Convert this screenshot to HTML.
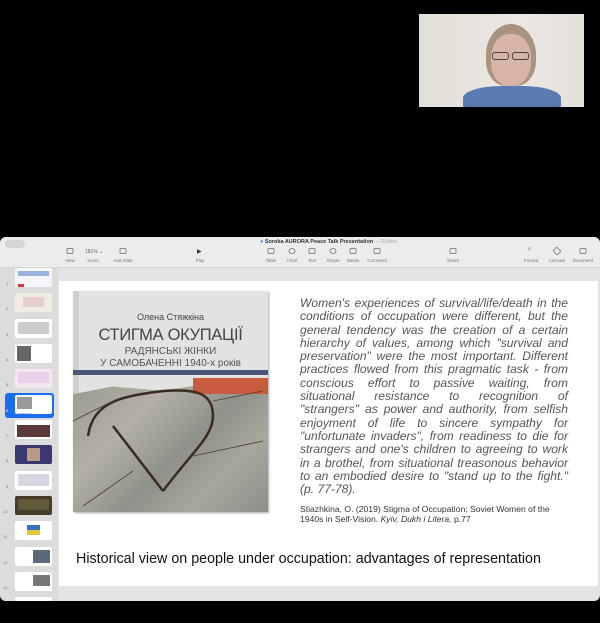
<!DOCTYPE html>
<html><head><meta charset="utf-8"><style>
*{margin:0;padding:0;box-sizing:border-box}
body{width:600px;height:623px;background:#000;position:relative;overflow:hidden;font-family:"Liberation Sans",sans-serif}
.abs{position:absolute}
#cam{left:419px;top:14px;width:165px;height:93px;background:#e6e3dd;overflow:hidden}
#win{left:0;top:237px;width:600px;height:364px;background:#e3e3e3;border-radius:6px;overflow:hidden}
#tb{left:0;top:0;width:600px;height:31px;background:#ececec;border-bottom:1px solid #d4d4d4}
.lbl{position:absolute;top:21px;font-size:4.5px;color:#777;transform:translateX(-50%)}
.ic{position:absolute;top:11px;width:7px;height:6px;border:1px solid #888;border-radius:1.5px;transform:translateX(-50%)}
#side{left:0;top:31px;width:58px;height:333px;background:#dcdcdc}
.th{position:absolute;left:15px;width:37px;height:19px;background:#fff;border-radius:2px;overflow:hidden}
.num{position:absolute;left:6px;font-size:4px;color:#777}
#slide{left:59px;top:44px;width:539px;height:305px;background:#fff}
#quote{left:300px;top:297px;width:268px;font-size:12.1px;line-height:13.3px;font-style:italic;color:#555}
#quote div{text-align:justify;text-align-last:justify;white-space:nowrap;height:13.3px}
#quote div.l{text-align-last:left}
</style></head><body>
<div id="cam" class="abs">
 <div class="abs" style="left:0;top:0;width:165px;height:93px;background:linear-gradient(90deg,#e2dfd9,#ebe8e3 60%,#e4e1dc)"></div>
 <div class="abs" style="left:67px;top:10px;width:50px;height:62px;border-radius:50% 50% 40% 40%;background:#a8937e"></div>
 <div class="abs" style="left:72px;top:20px;width:40px;height:52px;border-radius:45%;background:#d8b4a8"></div>
 <div class="abs" style="left:73px;top:38px;width:17px;height:8px;border:1px solid #444;border-radius:3px"></div>
 <div class="abs" style="left:93px;top:38px;width:17px;height:8px;border:1px solid #444;border-radius:3px"></div>
 <div class="abs" style="left:44px;top:72px;width:98px;height:30px;border-radius:40% 40% 0 0;background:#5b7bb0"></div>
</div>
<div id="win" class="abs">
 <div id="tb" class="abs">
  <div class="abs" style="left:5px;top:3px;width:20px;height:8px;background:#d5d5d5;border-radius:4px"></div>
  <div class="abs" style="left:260px;top:2px;font-size:5.5px;color:#333;font-weight:bold"><span style="color:#3a8ee6">●</span> Soroka AURORA Peace Talk Presentation <span style="color:#aaa;font-weight:normal">— Edited</span></div>
  <div class="ic" style="left:70px"></div><div class="lbl" style="left:70px">View</div>
  <div class="abs" style="left:85px;top:12px;font-size:5px;color:#666">181% ⌄</div><div class="lbl" style="left:93px">Zoom</div>
  <div class="ic" style="left:123px"></div><div class="lbl" style="left:123px">Add Slide</div>
  <div class="abs" style="left:197px;top:11px;font-size:6px;color:#333">▶</div><div class="lbl" style="left:200px">Play</div>
  <div class="ic" style="left:271px"></div><div class="lbl" style="left:271px">Table</div>
  <div class="ic" style="left:292px;border-radius:50%"></div><div class="lbl" style="left:292px">Chart</div>
  <div class="ic" style="left:312px"></div><div class="lbl" style="left:312px">Text</div>
  <div class="ic" style="left:333px;border-radius:50%"></div><div class="lbl" style="left:333px">Shape</div>
  <div class="ic" style="left:353px"></div><div class="lbl" style="left:353px">Media</div>
  <div class="ic" style="left:377px"></div><div class="lbl" style="left:377px">Comment</div>
  <div class="ic" style="left:453px"></div><div class="lbl" style="left:453px">Share</div>
  <div class="ic" style="left:531px;border:none;color:#777;font-size:7px;top:9px">⌕</div><div class="lbl" style="left:531px">Format</div>
  <div class="ic" style="left:557px;transform:translateX(-50%) rotate(45deg)"></div><div class="lbl" style="left:557px">Animate</div>
  <div class="ic" style="left:583px"></div><div class="lbl" style="left:583px">Document</div>
 </div>
 <div id="side" class="abs">
  <div class="abs" style="left:5px;top:125px;width:49px;height:25px;background:#1a6ef0;border-radius:3px"></div>
  <div class="th" style="top:0px;background:#f4f6fc"><div style="margin:3px;height:5px;background:#9ab0dd"></div><div style="margin:8px 3px 0;width:6px;height:3px;background:#d33"></div></div>
  <div class="th" style="top:25px;background:#f1ece2"><div style="margin:4px 8px;height:10px;background:#e7cfcf"></div></div>
  <div class="th" style="top:51px"><div style="margin:3px;height:12px;background:#ccc"></div></div>
  <div class="th" style="top:76px"><div style="float:left;margin:2px;width:14px;height:15px;background:#666"></div><div style="float:left;margin:2px;width:16px;height:15px;background:#aaa"></div></div>
  <div class="th" style="top:101px;background:#f3e6f0"><div style="margin:3px;height:11px;background:#e7d0e8"></div></div>
  <div class="th" style="top:127px"><div style="float:left;margin:2px;width:15px;height:12px;background:#999"></div><div style="float:left;margin:2px;width:15px;height:12px;background:#ccc"></div></div>
  <div class="th" style="top:152px"><div style="margin:5px 2px 0;height:12px;background:#5a3a36"></div></div>
  <div class="th" style="top:177px;background:#3a3870"><div style="margin:3px 12px;height:13px;background:#b79b84"></div></div>
  <div class="th" style="top:203px"><div style="margin:3px;height:12px;background:#d6d6e0"></div></div>
  <div class="th" style="top:228px;background:#4a3a2a"><div style="margin:3px;height:11px;background:#5e5a3a"></div></div>
  <div class="th" style="top:253px"><div style="margin:4px 12px;height:10px;background:#e5c53a;border-top:5px solid #3a70c0"></div></div>
  <div class="th" style="top:279px"><div style="margin:3px 2px 3px 18px;height:13px;background:#5a6a7a"></div></div>
  <div class="th" style="top:304px"><div style="margin:3px 2px 3px 18px;height:11px;background:#777"></div></div>
  <div class="th" style="top:329px"></div>
  <div class="num" style="top:13px">1</div><div class="num" style="top:38px">2</div><div class="num" style="top:64px">3</div><div class="num" style="top:89px">4</div><div class="num" style="top:114px">5</div><div class="num" style="top:140px;color:#fff">6</div><div class="num" style="top:165px">7</div><div class="num" style="top:190px">8</div><div class="num" style="top:216px">9</div><div class="num" style="top:241px;left:3px">10</div><div class="num" style="top:266px;left:3px">11</div><div class="num" style="top:292px;left:3px">12</div><div class="num" style="top:317px;left:3px">13</div>
 </div>
 <div id="slide" class="abs"></div>
</div>
<!-- book -->
<div class="abs" style="left:73px;top:291px;width:195px;height:221px;background:#e2e2e0;box-shadow:1px 1px 2px #aaa;overflow:hidden">
 <div class="abs" style="left:0;top:0;width:6px;height:221px;background:#cfcfcd"></div>
 <div class="abs" style="left:0;top:21px;width:195px;text-align:center;font-size:9px;color:#444">Олена Стяжкіна</div>
 <div class="abs" style="left:0;top:35px;width:195px;text-align:center;font-size:16.5px;color:#444;letter-spacing:-0.3px">СТИГМА ОКУПАЦІЇ</div>
 <div class="abs" style="left:0;top:55px;width:195px;text-align:center;font-size:10px;line-height:12px;color:#555">РАДЯНСЬКІ ЖІНКИ<br>У САМОБАЧЕННІ 1940-х років</div>
 <div class="abs" style="left:0;top:79px;width:195px;height:5px;background:#4a5578"></div>
 <div class="abs" style="left:0;top:93px;width:195px;height:128px;background:linear-gradient(135deg,#9a9a90,#b3b1a6 30%,#8f918a 55%,#a8a79e 75%,#8c8f8a);clip-path:polygon(0 8%,20% 2%,45% 5%,70% 0,100% 6%,100% 100%,0 100%)"></div>
 <div class="abs" style="left:120px;top:87px;width:75px;height:16px;background:#c85a3e"></div>
 <svg class="abs" style="left:0;top:0" width="195" height="221"><g fill="none" stroke="#3a2a22" stroke-width="2.5"><path d="M15 145 C20 110 50 105 90 100 C120 98 140 100 140 125 C140 145 120 160 90 200"/><path d="M40 135 L90 200"/></g><g fill="none" stroke="#4a3a34" stroke-width="0.8"><path d="M0 130 L40 110 M120 165 L190 150 M60 180 L10 215 M140 110 L190 100"/></g></svg>
</div>
<div id="quote" class="abs">
<div>Women's experiences of survival/life/death in the</div>
<div>conditions of occupation were different, but the</div>
<div>general tendency was the creation of a certain</div>
<div>hierarchy of values, among which "survival and</div>
<div>preservation" were the most important. Different</div>
<div>practices flowed from this pragmatic task - from</div>
<div>conscious effort to passive waiting, from</div>
<div>situational resistance to recognition of</div>
<div>"strangers" as power and authority, from selfish</div>
<div>enjoyment of life to sincere sympathy for</div>
<div>"unfortunate invaders", from readiness to die for</div>
<div>strangers and one's children to agreeing to work</div>
<div>in a brothel, from situational treasonous behavior</div>
<div>to an embodied desire to "stand up to the fight."</div>
<div class="l">(p. 77-78).</div>
</div>
<div class="abs" style="left:300px;top:504px;width:270px;font-size:8.6px;line-height:10px;color:#333">Stiazhkina, O. (2019) Stigma of Occupation: Soviet Women of the 1940s in Self-Vision. <i>Kyiv, Dukh i Litera,</i> p.77</div>
<div class="abs" style="left:76px;top:551px;font-size:14.3px;color:#111">Historical view on people under occupation: advantages of representation</div>
</body></html>
